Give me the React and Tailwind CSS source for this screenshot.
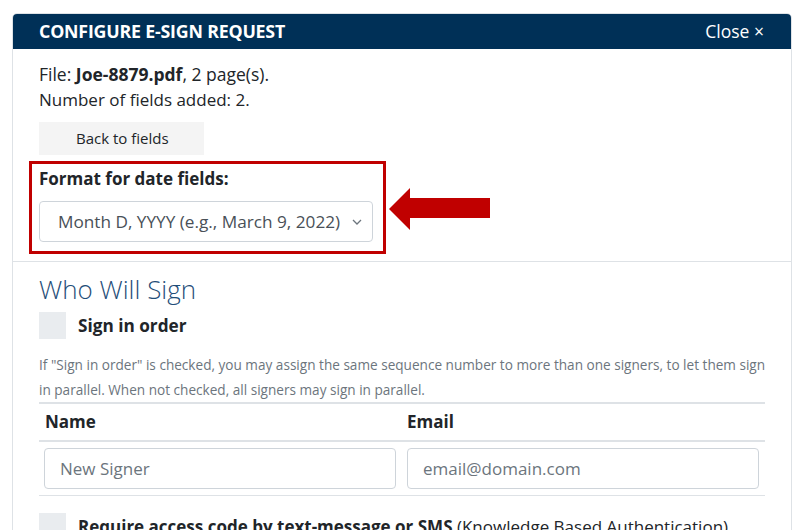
import React from "react";

const App = () => {
  return (
    <div className="w-[800px] h-[530px] overflow-hidden bg-white pt-[13px] pl-[12px] font-['Open_Sans',sans-serif] text-[#212529]">
      <div className="w-[780px] h-[600px] border border-[#dee2e6] rounded-t-[5px] overflow-hidden">
        {/* Header */}
        <div className="h-[35px] bg-[#003057] flex items-center justify-between pl-[26px] pr-[27px] text-white">
          <span className="text-[17.8px] font-bold tracking-[-0.2px]">CONFIGURE E-SIGN REQUEST</span>
          <span className="text-[17.5px]">Close ×</span>
        </div>

        {/* File info */}
        <div className="pl-[26px] pt-[12px]">
          <p className="text-[17.5px] leading-[26px]">
            File: <b>Joe-8879.pdf</b>, 2 page(s).
          </p>
          <p className="text-[17px] leading-[26px]">Number of fields added: 2.</p>
          <button className="mt-[9px] w-[165px] h-[33px] bg-[#f4f4f4] text-left pl-[37px] text-[15px]">
            Back to fields
          </button>

          {/* Date format */}
          <div className="flex items-center mt-[6px] -ml-[10px]">
            <div className="w-[357px] border-[3px] border-[#c00000] pl-[7px] pr-[10px] pt-[3px] pb-[9px]">
              <div className="text-[17px] font-bold leading-[24px]">Format for date fields:</div>
              <div className="mt-[10px] h-[41px] border border-[#ced4da] rounded-[4px] flex items-center justify-between pl-[18px] pr-[10px] text-[#495057] text-[17.2px]">
                <span>Month D, YYYY (e.g., March 9, 2022)</span>
                <svg width="10" height="6" viewBox="0 0 10 6" fill="none">
                  <path d="M1 1l4 4 4-4" stroke="#6c757d" strokeWidth="1.3" />
                </svg>
              </div>
            </div>
            <svg className="ml-[3px] mt-[3px]" width="101" height="42" viewBox="0 0 101 42">
              <polygon points="0,21 21,0 21,10 101,10 101,30 21,30 21,42" fill="#c00000" />
            </svg>
          </div>
        </div>

        <div className="mt-[7px] border-t border-[#dee2e6]" />

        {/* Who will sign */}
        <div className="pl-[26px] pr-[25px] pt-[11px]">
          <h2 className="text-[26px] font-light leading-[32px] text-[#1f4e79]">Who Will Sign</h2>
          <label className="mt-[7px] flex items-center gap-[12px]">
            <span className="w-[27px] h-[27px] bg-[#e9ecef]" />
            <span className="text-[17.2px] font-bold">Sign in order</span>
          </label>
          <p className="mt-[13px] w-[728px] text-[13.6px] leading-[25px] text-[#6c757d]">
            If "Sign in order" is checked, you may assign the same sequence number to more than one signers, to let them sign in parallel. When not checked, all signers may sign in parallel.
          </p>

          <table className="w-[726px] border-collapse">
            <thead>
              <tr className="border-t-2 border-b-2 border-[#dee2e6]">
                <th className="text-left text-[17px] font-bold h-[38px] pl-[6px] w-1/2">Name</th>
                <th className="text-left text-[17px] font-bold h-[38px] pl-[5px]">Email</th>
              </tr>
            </thead>
            <tbody>
              <tr className="border-b border-[#dee2e6]">
                <td className="pl-[5px] pr-[6px] pt-[6px] pb-[6px]">
                  <input
                    placeholder="New Signer"
                    className="w-full h-[41px] border border-[#ced4da] rounded-[4px] px-[15px] text-[17px] placeholder:text-[#6c757d] outline-none"
                  />
                </td>
                <td className="pl-[5px] pr-[6px] pt-[6px] pb-[6px]">
                  <input
                    placeholder="email@domain.com"
                    className="w-full h-[41px] border border-[#ced4da] rounded-[4px] px-[15px] text-[17px] placeholder:text-[#6c757d] outline-none"
                  />
                </td>
              </tr>
            </tbody>
          </table>

          <label className="mt-[17px] flex items-center gap-[12px]">
            <span className="w-[27px] h-[27px] bg-[#e9ecef] shrink-0" />
            <span className="text-[17px] whitespace-nowrap">
              <b>Require access code by text-message or SMS</b> (Knowledge Based Authentication)
            </span>
          </label>
        </div>
      </div>
    </div>
  );
};

export default App;
